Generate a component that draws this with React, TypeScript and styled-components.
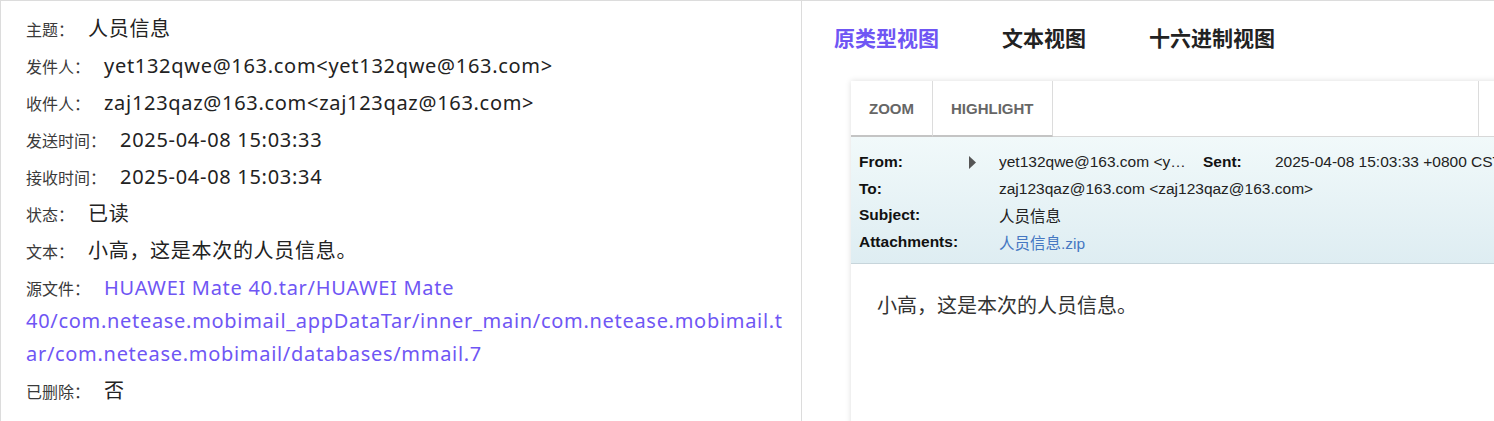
import React from "react";
import styled, { createGlobalStyle } from "styled-components";

const GlobalStyle = createGlobalStyle`
  html, body {
    margin: 0;
    padding: 0;
    background: #fff;
  }
  body {
    font-family: "Noto Sans", "Noto Sans CJK SC", sans-serif;
    color: #222;
  }
`;

interface Field {
  label: string;
  value: string;
  link?: boolean;
}

const fields: Field[] = [
  { label: "主题：", value: "人员信息" },
  { label: "发件人：", value: "yet132qwe@163.com<yet132qwe@163.com>" },
  { label: "收件人：", value: "zaj123qaz@163.com<zaj123qaz@163.com>" },
  { label: "发送时间：", value: "2025-04-08 15:03:33" },
  { label: "接收时间：", value: "2025-04-08 15:03:34" },
  { label: "状态：", value: "已读" },
  { label: "文本：", value: "小高，这是本次的人员信息。" },
  {
    label: "源文件：",
    value:
      "HUAWEI Mate 40.tar/HUAWEI Mate 40/com.netease.mobimail_appDataTar/inner_main/com.netease.mobimail.tar/com.netease.mobimail/databases/mmail.7",
    link: true,
  },
  { label: "已删除：", value: "否" },
];

const tabs = ["原类型视图", "文本视图", "十六进制视图"];

const App = () => {
  return (
    <>
      <GlobalStyle />
      <Page>
        <DetailPanel>
          {fields.map((f) => (
            <FieldRow key={f.label}>
              <FieldLabel>{f.label}</FieldLabel>
              <FieldValue link={f.link}>{f.value}</FieldValue>
            </FieldRow>
          ))}
        </DetailPanel>

        <ViewPanel>
          <TabBar>
            {tabs.map((t, i) => (
              <Tab key={t} active={i === 0}>
                {t}
              </Tab>
            ))}
          </TabBar>

          <Viewer>
            <Toolbar>
              <ToolButton>ZOOM</ToolButton>
              <ToolButton>HIGHLIGHT</ToolButton>
              <ToolSpacer />
              <ToolButton edge />
            </Toolbar>

            <MailHeader>
              <HeadLabel>From:</HeadLabel>
              <Arrow>
                <svg width="8" height="13" viewBox="0 0 8 13">
                  <polygon points="0,0 7,6.5 0,13" fill="#555" />
                </svg>
              </Arrow>
              <HeadValue truncate>yet132qwe@163.com &lt;yet132qwe@163.com&gt;</HeadValue>
              <HeadLabel>Sent:</HeadLabel>
              <HeadValue>2025-04-08 15:03:33 +0800 CST</HeadValue>

              <HeadLabel>To:</HeadLabel>
              <span />
              <HeadValue wide>zaj123qaz@163.com &lt;zaj123qaz@163.com&gt;</HeadValue>

              <HeadLabel>Subject:</HeadLabel>
              <span />
              <HeadValue wide>人员信息</HeadValue>

              <HeadLabel>Attachments:</HeadLabel>
              <span />
              <HeadValue wide>
                <AttachLink>人员信息.zip</AttachLink>
              </HeadValue>
            </MailHeader>

            <MailBody>小高，这是本次的人员信息。</MailBody>
          </Viewer>
        </ViewPanel>
      </Page>
    </>
  );
};

export default App;

const Page = styled.div`
  display: flex;
  height: 421px;
  box-sizing: border-box;
  border-top: 1px solid #dcdcdc;
  border-left: 1px solid #dcdcdc;
  overflow: hidden;
`;

const DetailPanel = styled.div`
  width: 801px;
  flex-shrink: 0;
  box-sizing: border-box;
  padding: 12px 14px 0 25px;
  border-right: 1px solid #dcdcdc;
`;

const FieldRow = styled.div`
  line-height: 32px;
  margin-bottom: 4px;
  overflow-wrap: anywhere;
`;

const FieldLabel = styled.span`
  font-size: 16px;
  line-height: 20px;
  color: #3a3a3a;
  margin-right: 14px;
`;

const FieldValue = styled.span<{ link?: boolean }>`
  font-size: 20px;
  letter-spacing: 0.7px;
  color: ${({ link }) => (link ? "#6f56f4" : "#222")};
`;

const ViewPanel = styled.div`
  flex: 1;
  min-width: 0;
  padding: 20px 0 0 32px;
  overflow: hidden;
`;

const TabBar = styled.div`
  display: flex;
  gap: 63px;
  height: 32px;
  align-items: center;
`;

const Tab = styled.div<{ active?: boolean }>`
  font-family: "Noto Sans CJK SC", sans-serif;
  font-size: 21px;
  font-weight: 700;
  color: ${({ active }) => (active ? "#6f56f4" : "#222")};
`;

const Viewer = styled.div`
  margin: 28px 0 0 17px;
  width: 720px;
  height: 400px;
  background: #fff;
  box-shadow: 0 0 6px rgba(0, 0, 0, 0.14);
  font-family: "Liberation Sans", Arial, sans-serif;
`;

const Toolbar = styled.div`
  display: flex;
  height: 55px;
  border-bottom: 1px solid #d8d8d8;
`;

const ToolButton = styled.div<{ edge?: boolean }>`
  display: flex;
  align-items: center;
  padding: 0 18px;
  font-size: 15px;
  font-weight: 700;
  color: #666;
  border-right: ${({ edge }) => (edge ? "none" : "1px solid #dcdcdc")};
  border-left: ${({ edge }) => (edge ? "1px solid #dcdcdc" : "none")};
  border-bottom: ${({ edge }) => (edge ? "none" : "2px solid #c4c4c4")};
  margin-bottom: ${({ edge }) => (edge ? "0" : "-1px")};
`;

const ToolSpacer = styled.div`
  width: 425px;
`;

const MailHeader = styled.div`
  display: grid;
  grid-template-columns: 110px 30px 204px 72px 1fr;
  grid-auto-rows: 26.5px;
  align-items: center;
  padding: 12px 0 8px 8px;
  background: linear-gradient(to bottom, #f1f9fa, #deedf2);
  border-bottom: 1px solid #c7d5db;
  font-size: 15.5px;
  color: #222;
`;

const HeadLabel = styled.div`
  font-weight: 700;
  color: #111;
`;

const Arrow = styled.div`
  display: flex;
  align-items: center;
`;

const HeadValue = styled.div<{ truncate?: boolean; wide?: boolean }>`
  white-space: nowrap;
  overflow: hidden;
  text-overflow: ${({ truncate }) => (truncate ? "ellipsis" : "clip")};
  padding-right: ${({ truncate }) => (truncate ? "12px" : "0")};
  grid-column: ${({ wide }) => (wide ? "3 / -1" : "auto")};
  font-family: "Liberation Sans", "Noto Sans CJK SC", sans-serif;
`;

const AttachLink = styled.span`
  color: #4577c2;
`;

const MailBody = styled.div`
  padding: 26px 26px;
  font-family: "Noto Sans CJK SC", sans-serif;
  font-size: 20px;
  color: #333;
`;
